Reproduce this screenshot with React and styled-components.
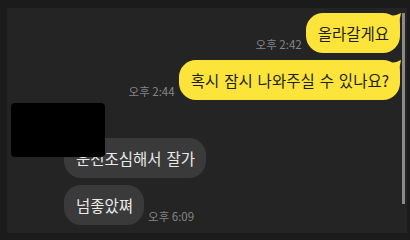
import React from "react";
import styled, { createGlobalStyle } from "styled-components";

const Global = createGlobalStyle`
  html, body { margin: 0; padding: 0; background: #1b1b1b; }
  body { font-family: "Noto Sans CJK KR", "Noto Sans", sans-serif; }
`;

const Page = styled.div`
  width: 410px;
  height: 240px;
  box-sizing: border-box;
  padding: 8px 3px 7px 7px;
  background: #1b1b1b;
`;

const Panel = styled.div`
  position: relative;
  display: flex;
  height: 100%;
  background: #242424;
`;

const Content = styled.div`
  flex: 1;
  display: flex;
  flex-direction: column;
  gap: 7px;
  padding: 5px 2px 0 0;
  position: relative;
`;

const ScrollTrack = styled.div`
  width: 3px;
  margin-right: 2px;
  padding-top: 5px;
`;

const Thumb = styled.div`
  width: 3px;
  height: 191px;
  background: #8a8a8a;
`;

const Row = styled.div`
  display: flex;
  align-items: flex-end;
  justify-content: ${(p) => (p.$mine ? "flex-end" : "flex-start")};
  gap: 4px;
`;

const Time = styled.span`
  font-size: 11.5px;
  line-height: 14px;
  color: #858585;
  margin-bottom: 2px;
  white-space: nowrap;
`;

const Bubble = styled.div`
  position: relative;
  box-sizing: border-box;
  height: 40px;
  display: flex;
  align-items: center;
  padding: 0 11px 0 12px;
  border-radius: 17px;
  font-size: 15.5px;
  line-height: 20px;
  word-spacing: 1.5px;
  white-space: nowrap;
  background: ${(p) => (p.$mine ? "#fce43a" : "#3a3a3a")};
  color: ${(p) => (p.$mine ? "#1f1f1f" : "#e9e9e9")};
`;

const Ear = styled.svg`
  position: absolute;
  top: 0;
  right: -2px;
  width: 12px;
  height: 18px;
`;

const Group = styled.div`
  position: relative;
  display: flex;
  flex-direction: column;
  gap: 7px;
  padding-left: 57px;
`;

const NameLine = styled.div`
  height: 24px;
`;

const Redaction = styled.div`
  position: absolute;
  left: 4px;
  top: -4px;
  width: 94px;
  height: 54px;
  border-radius: 4px;
  background: #000;
`;

const MyBubble = ({ children }) => (
  <Bubble $mine>
    {children}
    <Ear viewBox="0 0 12 18">
      <path d="M0 3 Q6 3 11 0 Q9 6 10 13 L10 18 L0 18 Z" fill="#fce43a" />
    </Ear>
  </Bubble>
);

export default function App() {
  return (
    <>
      <Global />
      <Page>
        <Panel>
          <Content>
            <Row $mine>
              <Time>오후 2:42</Time>
              <MyBubble>올라갈게요</MyBubble>
            </Row>
            <Row $mine>
              <Time>오후 2:44</Time>
              <MyBubble>혹시 잠시 나와주실 수 있나요?</MyBubble>
            </Row>
            <Group>
              <NameLine />
              <Row>
                <Bubble>운전조심해서 잘가</Bubble>
              </Row>
              <Row>
                <Bubble>넘좋았쪄</Bubble>
                <Time>오후 6:09</Time>
              </Row>
              <Redaction />
            </Group>
          </Content>
          <ScrollTrack>
            <Thumb />
          </ScrollTrack>
        </Panel>
      </Page>
    </>
  );
}
